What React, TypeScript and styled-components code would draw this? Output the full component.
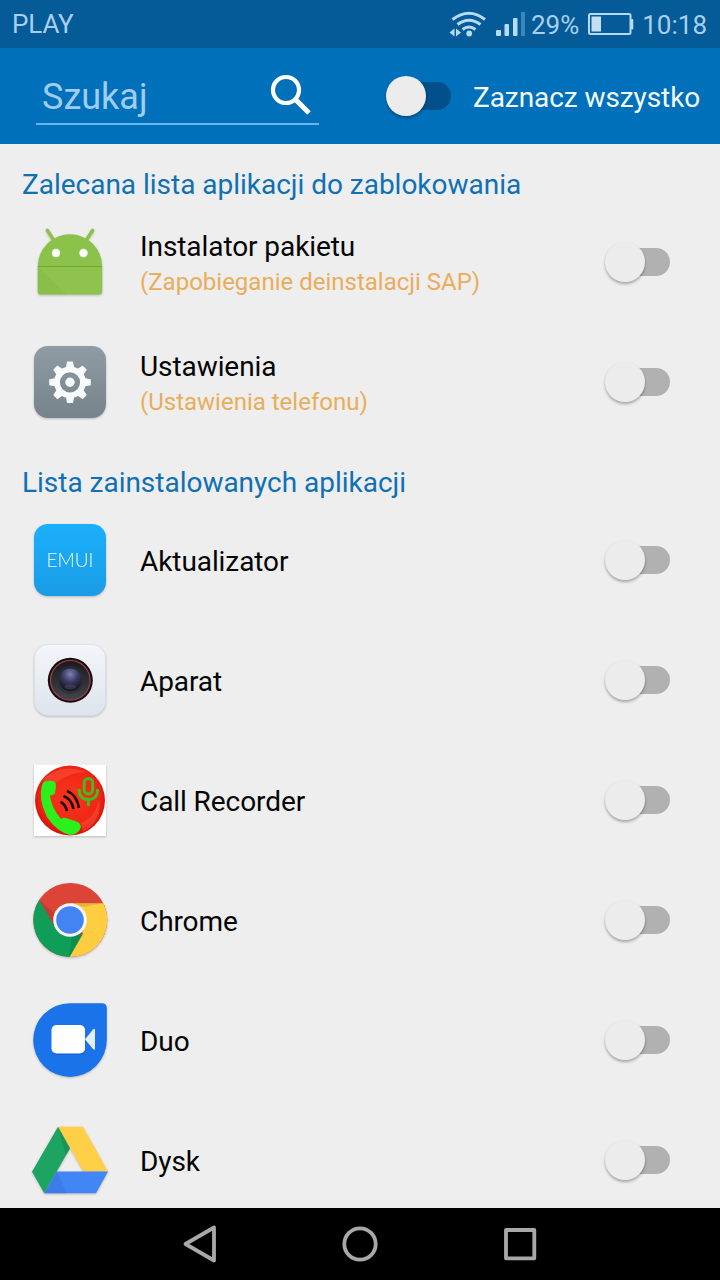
import React from 'react';
import styled, { createGlobalStyle } from 'styled-components';

const GlobalStyle = createGlobalStyle`
    * {
        box-sizing: border-box;
    }

    body {
        margin: 0;
        font-family: Roboto, "Liberation Sans", sans-serif;
        background-color: #eeeeee;
    }
`;

const Screen = styled.div`
    display: flex;
    flex-direction: column;
    width: 720px;
    height: 1280px;
    overflow: hidden;
    background-color: #eeeeee;
`;

const StatusBar = styled.div`
    display: flex;
    align-items: center;
    flex: none;
    height: 48px;
    padding: 0 13px 0 12px;
    font-size: 26px;
    line-height: 48px;
    color: #a9cfee;
    background-color: #045b97;
`;

const Carrier = styled.span`
    flex: 1;
    letter-spacing: -0.1px;
`;

const StatusIcons = styled.svg`
    display: block;
    margin-right: 6px;
`;

const Battery = styled.svg`
    display: block;
    margin: 0 8px 0 9px;
`;

const StatusText = styled.span`
    padding-top: 1px;
`;

const Toolbar = styled.div`
    display: flex;
    align-items: center;
    flex: none;
    height: 96px;
    padding: 0 20px 0 36px;
    background-color: #0070bb;
`;

const SearchField = styled.div`
    display: flex;
    align-items: center;
    justify-content: space-between;
    flex: none;
    width: 283px;
    height: 58px;
    padding: 0 6px;
    border-bottom: 2px solid #66b5ee;
`;

const SearchHint = styled.span`
    padding-top: 4px;
    font-size: 36px;
    line-height: 42px;
    color: #9fcdf0;
`;

const ToggleLabel = styled.span`
    margin-left: 22px;
    padding-top: 3px;
    font-size: 28px;
    line-height: 36px;
    letter-spacing: -0.08px;
    white-space: nowrap;
    color: #f2fafd;
`;

const Track = styled.div<{ $color: string }>`
    display: flex;
    align-items: center;
    flex: none;
    width: 61px;
    height: 28px;
    border-radius: 14px;
    background-color: ${props => props.$color};
`;

const Thumb = styled.div`
    flex: none;
    width: 40px;
    height: 40px;
    margin-left: -4px;
    border-radius: 50%;
    background-color: #ececec;
    box-shadow: 0 2px 3px rgba(0, 0, 0, 0.3);
`;

const SelectAll = styled.div`
    display: flex;
    align-items: center;
    flex: none;
    margin-left: 71px;
`;

const AppList = styled.div`
    flex: 1;
    min-height: 0;
    overflow: hidden;
`;

const SectionTitle = styled.div`
    height: 58px;
    padding: 23px 22px 0;
    font-size: 28px;
    line-height: 36px;
    letter-spacing: -0.02px;
    white-space: nowrap;
    color: #0f70b4;
`;

const Row = styled.div`
    display: flex;
    align-items: center;
    height: 120px;
    padding: 0 50px 0 20px;
`;

const Labels = styled.div`
    flex: 1;
    padding: 3px 0 0 20px;
    white-space: nowrap;
`;

const AppName = styled.div`
    font-size: 28px;
    line-height: 36px;
    letter-spacing: -0.08px;
    color: #050505;
`;

const AppNote = styled.div`
    font-size: 24px;
    line-height: 34px;
    color: #e9ad5b;
`;

const IconBox = styled.svg`
    display: block;
    flex: none;
    width: 100px;
    height: 90px;
    filter: drop-shadow(0 1px 1px rgba(0, 0, 0, 0.22));
`;

const BadgeText = styled.text`
    font-family: Lato, Roboto, sans-serif;
    font-size: 20px;
    font-weight: 300;
    fill: #f2faff;
`;

const NavBar = styled.div`
    display: flex;
    align-items: center;
    justify-content: center;
    gap: 112px;
    flex: none;
    height: 72px;
    background-color: #000000;
`;

const NavIcon = styled.svg`
    width: 48px;
    height: 48px;
    fill: none;
    stroke: #a8a8a8;
    stroke-width: 3.8;
    stroke-linejoin: round;
`;

const PackageIcon = () => (
    <IconBox viewBox="0 2 100 90">
        <path d="M27.300 15.300 34 25.500M72.700 15.300 66 25.500" stroke="#8bc34a" strokeWidth="3.400" strokeLinecap="round" />
        <path d="M17.800 51.500A32.200 32.200 0 0 1 82.200 51.500Z" fill="#8bc34a" />
        <path d="M17.800 51H82.200V76.500Q82.200 79.500 79.200 79.500H20.800Q17.800 79.500 17.800 76.500Z" fill="#8ec44e" />
        <path d="M18 51H82V52H18Z" fill="#72a43a" />
        <path d="M18.500 52 46 79.500H20.800Q17.800 79.500 17.800 76.500V52Z" fill="#82b745" opacity=".45" />
        <circle cx="36" cy="38" r="4.200" fill="#fff" />
        <circle cx="63.500" cy="38" r="4.200" fill="#fff" />
    </IconBox>
);

const teeth = [0, 45, 90, 135, 180, 225, 270, 315];

const SettingsIcon = () => (
    <IconBox viewBox="0 2 100 90">
        <defs>
            <linearGradient id="settingsBg" x1="0" y1="0" x2="0" y2="1">
                <stop offset="0" stopColor="#8f9ca3" />
                <stop offset="1" stopColor="#75838b" />
            </linearGradient>
        </defs>
        <rect x="14" y="11" width="72" height="72" rx="14" fill="url(#settingsBg)" />
        <g fill="#f8fbfc">
            {teeth.map(angle => (
                <path key={angle} d="M45.300 36 47 26.500H53L54.700 36Z" transform={`rotate(${angle} 50 47.300)`} />
            ))}
        </g>
        <circle cx="50" cy="47.300" r="13" fill="none" stroke="#f8fbfc" strokeWidth="5.800" />
        <circle cx="50" cy="47.300" r="4.700" fill="#f8fbfc" />
    </IconBox>
);

const EmuiIcon = () => (
    <IconBox viewBox="0 0 100 90">
        <defs>
            <linearGradient id="emuiBg" x1="0" y1="0" x2="0" y2="1">
                <stop offset="0" stopColor="#1bb0fb" />
                <stop offset="1" stopColor="#1a9ce6" />
            </linearGradient>
        </defs>
        <rect x="14" y="9" width="72" height="72" rx="14" fill="url(#emuiBg)" />
        <BadgeText x="26.500" y="51.800" textLength="47" lengthAdjust="spacingAndGlyphs">EMUI</BadgeText>
    </IconBox>
);

const CameraIcon = () => (
    <IconBox viewBox="0 0 100 90">
        <defs>
            <linearGradient id="cameraBg" x1="0" y1="0" x2="0" y2="1">
                <stop offset="0" stopColor="#f3f6fa" />
                <stop offset="1" stopColor="#dde4eb" />
            </linearGradient>
            <linearGradient id="cameraRing" x1="0" y1="0" x2="0" y2="1">
                <stop offset="0" stopColor="#17191e" />
                <stop offset="1" stopColor="#41464a" />
            </linearGradient>
            <radialGradient id="cameraLens" cx=".5" cy=".25" r=".7">
                <stop offset="0" stopColor="#7b82b4" />
                <stop offset=".5" stopColor="#3a3b60" />
                <stop offset="1" stopColor="#151520" />
            </radialGradient>
        </defs>
        <rect x="14.500" y="9.500" width="71" height="71" rx="14" fill="url(#cameraBg)" stroke="#d8dee5" strokeWidth=".6" />
        <circle cx="50.300" cy="45.300" r="22.500" fill="#160f12" />
        <circle cx="50.300" cy="45.300" r="19.800" fill="url(#cameraRing)" stroke="#a93e4b" strokeWidth="1.200" />
        <circle cx="50.300" cy="44.800" r="14" fill="#2c2d35" opacity=".7" />
        <circle cx="50.300" cy="44.800" r="11.300" fill="url(#cameraLens)" />
        <ellipse cx="50.300" cy="52" rx="6" ry="2.500" fill="#5d4a63" opacity=".45" />
    </IconBox>
);

const RecorderIcon = () => (
    <IconBox viewBox="0 0 100 90">
        <defs>
            <radialGradient id="recorderBg" cx=".5" cy=".45" r=".55">
                <stop offset="0" stopColor="#f9361b" />
                <stop offset=".75" stopColor="#ef2617" />
                <stop offset="1" stopColor="#d80f08" />
            </radialGradient>
        </defs>
        <rect x="14" y="9.500" width="72" height="71.500" fill="#fff" />
        <circle cx="50" cy="45.500" r="35" fill="url(#recorderBg)" />
        <path d="M25 22Q45 8 66 17Q52 17 40 25Q29 32 23 43Q20 31 25 22Z" fill="#ff694d" opacity=".35" />
        <path d="M61 68Q76 62 79 44Q83 66 63 77Z" fill="#ff7a5c" opacity=".3" />
        <path
            d="M24 27Q27 25 33 26Q36 27 36 31L35 38Q34 40 30 40.500Q31 52 41 64Q43 62 46 63L58 67Q61 69 61 72Q58 80 50 80Q37 77 27 62Q18 44 22 30Z"
            fill="#2bf01b"
        />
        <g fill="none" stroke="#1d0503" strokeWidth="2.600">
            <path d="M47 36Q57 40 59 53" />
            <path d="M43.500 41Q51.500 44 53.500 54" />
            <path d="M40.500 47Q45.500 49 47 56" />
        </g>
        <g fill="none" stroke="#3cbf1f" strokeWidth="2.900">
            <rect x="64.200" y="23.500" width="8.500" height="15.500" rx="4.250" />
            <path d="M59 34Q59 44.500 68.400 44.500T77.600 34M68.400 44.500V51" />
        </g>
    </IconBox>
);

const ChromeIcon = () => (
    <IconBox viewBox="0 0 100 90">
        <defs>
            <clipPath id="chromeClip">
                <circle cx="50.300" cy="45" r="37" />
            </clipPath>
        </defs>
        <g clipPath="url(#chromeClip)">
            <rect x="10" y="5" width="80" height="80" fill="#db4437" />
            <path d="M0 0 19.300 25 35.500 53 63 60 49 90H0Z" fill="#109d58" />
            <path d="M50.300 28.300H95V90H45L63 59Z" fill="#ffcd40" />
            <path d="M19.300 25 34 50 36 40Z" fill="#8e2a20" opacity=".3" />
            <path d="M50 28.300H82L63 32Z" fill="#b88b1c" opacity=".35" />
            <path d="M64 55 49 82 52 61Z" fill="#096139" opacity=".25" />
        </g>
        <circle cx="50" cy="45" r="16.800" fill="#f4f6f8" />
        <circle cx="50" cy="45" r="13.800" fill="#4384f3" />
    </IconBox>
);

const DuoIcon = () => (
    <IconBox viewBox="0 0 100 90">
        <path d="M50 8.300H82Q86.800 8.300 86.800 13V45A36.800 36.800 0 1 1 50 8.300Z" fill="#1a73e8" />
        <path d="M37 31.500H61Q65 31.500 65 35.500V56Q65 60 61 60H37Q33 60 33 56V35.500Q33 31.500 37 31.500Z" fill="#0d55b5" opacity=".5" />
        <rect x="31.500" y="30" width="33.500" height="28.500" rx="5" fill="#fff" />
        <path d="M65 44.300 73 34.500Q75 32.800 75 35V53.500Q75 55.800 73 54Z" fill="#e3eefc" />
    </IconBox>
);

const DriveIcon = () => (
    <IconBox viewBox="0 0 100 90">
        <path d="M38 11.700H63L88 56.500H63.500Z" fill="#ffcf48" />
        <path d="M38 11.700 50 33.300 24.300 78.300 12 56.800Z" fill="#1da462" />
        <path d="M36.500 56.500H88L76 78.300H24.300Z" fill="#4285f4" />
        <path d="M36.500 56.500 47 78.300H24.300Z" fill="#2d62c8" opacity=".25" />
        <path d="M38 11.700 50 33.300 46 40Z" fill="#0a6237" opacity=".25" />
    </IconBox>
);

type AppEntry = {
    name: string;
    note?: string;
    Icon: () => React.JSX.Element;
};

const recommendedApps: AppEntry[] = [
    { name: 'Instalator pakietu', note: '(Zapobieganie deinstalacji SAP)', Icon: PackageIcon },
    { name: 'Ustawienia', note: '(Ustawienia telefonu)', Icon: SettingsIcon },
];

const installedApps: AppEntry[] = [
    { name: 'Aktualizator', Icon: EmuiIcon },
    { name: 'Aparat', Icon: CameraIcon },
    { name: 'Call Recorder', Icon: RecorderIcon },
    { name: 'Chrome', Icon: ChromeIcon },
    { name: 'Duo', Icon: DuoIcon },
    { name: 'Dysk', Icon: DriveIcon },
];

const Toggle = ({ color = '#b1b1b1' }: { color?: string }) => (
    <Track $color={color}>
        <Thumb />
    </Track>
);

const AppRow = ({ name, note, Icon }: AppEntry) => (
    <Row>
        <Icon />
        <Labels>
            <AppName>{name}</AppName>
            {note && <AppNote>{note}</AppNote>}
        </Labels>
        <Toggle />
    </Row>
);

function App() {
    return (
        <Screen>
            <GlobalStyle />
            <StatusBar>
                <Carrier>PLAY</Carrier>
                {/* wifi and signal strength */}
                <StatusIcons width="78" height="48" viewBox="447 0 78 48">
                    <g fill="none" stroke="#b5dbf6" strokeWidth="3.100">
                        <path d="M452.500 19.500Q469 7 485 19.500" />
                        <path d="M457.500 24.500Q469 16 480.500 24.500" />
                        <path d="M462.500 29.500Q469 24.500 475.500 29.500" />
                    </g>
                    <circle cx="469.200" cy="33.500" r="2.900" fill="#b5dbf6" />
                    <path d="M454.500 28.500V36.500L449.500 32.500ZM456 28.500V36.500L461 32.500Z" fill="#b5dbf6" />
                    <g fill="#b5dbf6">
                        <rect x="496" y="30" width="5" height="6" rx="1" />
                        <rect x="504.500" y="24" width="4.500" height="12" rx="1" />
                        <rect x="513" y="18" width="4.500" height="18" rx="1" />
                    </g>
                    <rect x="521" y="12" width="4" height="24" fill="#3c86bf" />
                </StatusIcons>
                <StatusText>29%</StatusText>
                <Battery width="46" height="48" viewBox="588 0 46 48">
                    <rect x="589" y="14" width="41.500" height="20" rx="1.500" fill="none" stroke="#b5dbf6" strokeWidth="2" />
                    <rect x="591.500" y="16.500" width="9.500" height="15" fill="#c3dff0" />
                    <rect x="631" y="19" width="2.300" height="10.500" rx="1" fill="#b5dbf6" />
                </Battery>
                <StatusText>10:18</StatusText>
            </StatusBar>
            <Toolbar>
                <SearchField>
                    <SearchHint>Szukaj</SearchHint>
                    <svg width="44" height="44" viewBox="269 73 44 44" fill="none" stroke="#fff">
                        <circle cx="286" cy="90" r="13" strokeWidth="4.200" />
                        <path d="M295.500 99.500 309 113" strokeWidth="5" />
                    </svg>
                </SearchField>
                <SelectAll>
                    <Toggle color="#01508b" />
                    <ToggleLabel>Zaznacz wszystko</ToggleLabel>
                </SelectAll>
            </Toolbar>
            <AppList>
                <SectionTitle>Zalecana lista aplikacji do zablokowania</SectionTitle>
                {recommendedApps.map(app => <AppRow key={app.name} {...app} />)}
                <SectionTitle>Lista zainstalowanych aplikacji</SectionTitle>
                {installedApps.map(app => <AppRow key={app.name} {...app} />)}
            </AppList>
            <NavBar>
                <NavIcon viewBox="0 0 48 48">
                    <path d="M9.500 24 38 7.500V40.500Z" />
                </NavIcon>
                <NavIcon viewBox="0 0 48 48">
                    <circle cx="24" cy="24" r="15.700" />
                </NavIcon>
                <NavIcon viewBox="0 0 48 48">
                    <rect x="10" y="10" width="28.300" height="28.300" />
                </NavIcon>
            </NavBar>
        </Screen>
    );
}

export default App;
